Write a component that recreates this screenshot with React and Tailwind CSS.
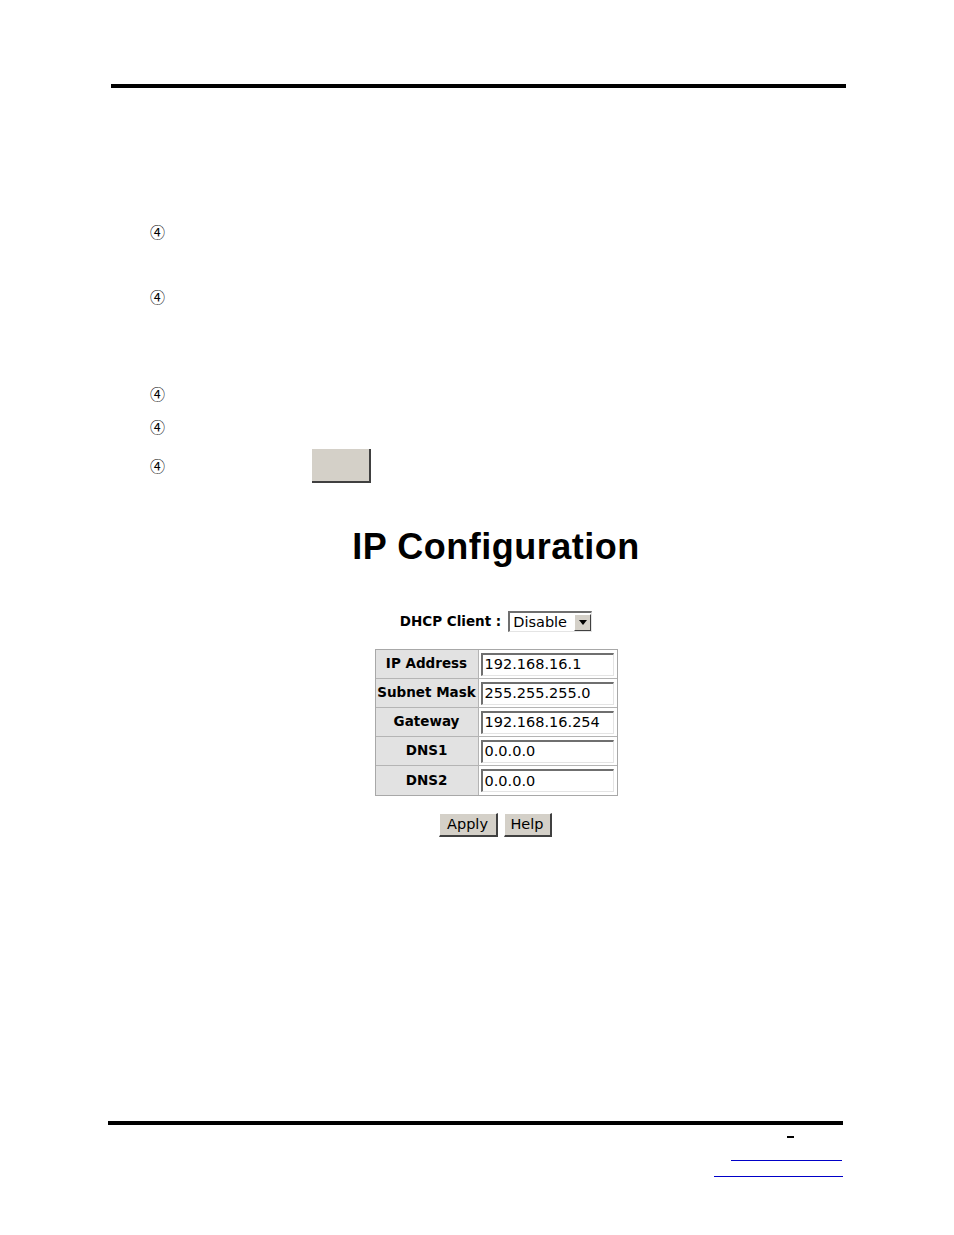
import React from "react";

const dv = { fontFamily: '"DejaVu Sans", Verdana, sans-serif' };

function Circ() {
  return (
    <span
      className="block w-[14px] text-[15px] leading-[16px] h-[16px] text-black"
      style={{ fontFamily: '"Noto Sans CJK JP", "DejaVu Sans", sans-serif' }}
    >
      ④
    </span>
  );
}

function WinInput({ value }) {
  return (
    <div className="h-[23px] w-[133px] bg-white border-t-2 border-l-2 border-t-[#6f6f6f] border-l-[#6f6f6f] border-b border-r border-b-[#e4e4e4] border-r-[#e4e4e4] flex items-center pl-[2px]">
      <span className="text-[14.5px] leading-none text-black" style={dv}>
        {value}
      </span>
    </div>
  );
}

function WinButton({ children, w }) {
  return (
    <div
      className={`h-[24px] ${w} bg-[#d4d0c8] border-t border-l border-t-white border-l-white border-b-2 border-r-2 border-b-[#404040] border-r-[#404040] flex items-center justify-center`}
    >
      <span className="text-[14.5px] leading-none text-black" style={dv}>
        {children}
      </span>
    </div>
  );
}

const rows = [
  ["IP Address", "192.168.16.1"],
  ["Subnet Mask", "255.255.255.0"],
  ["Gateway", "192.168.16.254"],
  ["DNS1", "0.0.0.0"],
  ["DNS2", "0.0.0.0"],
];

export default function App() {
  return (
    <div className="w-[954px] h-[1235px] bg-white overflow-hidden pt-[84px]">
      {/* top rule */}
      <div className="ml-[111px] w-[735px] h-[4px] bg-black" />

      {/* list bullets */}
      <div className="ml-[150px] flex flex-col">
        <div className="mt-[136px]">
          <Circ />
        </div>
        <div className="mt-[49px]">
          <Circ />
        </div>
        <div className="mt-[81px]">
          <Circ />
        </div>
        <div className="mt-[17px]">
          <Circ />
        </div>
        <div className="mt-[14px] flex items-center h-[34px]">
          <Circ />
          <div className="ml-[148px] w-[59px] h-[34px] bg-[#d4d0c8] border-r-2 border-b-2 border-r-[#404040] border-b-[#404040]" />
        </div>
      </div>

      {/* IP configuration panel */}
      <div className="ml-[345px] w-[302px] flex flex-col items-center">
        <div
          className="mt-[46px] text-[36px] leading-none font-bold text-black tracking-[0.5px]"
          style={{ fontFamily: '"Liberation Sans", Arial, sans-serif' }}
        >
          IP Configuration
        </div>

        <div className="mt-[46px] h-[21px] flex items-center">
          <span className="text-[13.5px] font-bold text-black leading-none mr-[7px]" style={dv}>
            DHCP Client :
          </span>
          <div className="w-[84px] h-[21px] bg-white border-t-2 border-l-2 border-t-[#6f6f6f] border-l-[#6f6f6f] border-b border-r border-b-[#e4e4e4] border-r-[#e4e4e4] flex items-center justify-between pl-[3px]">
            <span className="text-[14.5px] leading-none text-black" style={dv}>
              Disable
            </span>
            <div className="w-[17px] h-[17px] bg-[#d4d0c8] border-t border-l border-t-white border-l-white border-b border-r border-b-[#404040] border-r-[#404040] flex items-center justify-center">
              <svg width="8" height="5" viewBox="0 0 8 5">
                <path d="M0 0H8L4 5Z" fill="#000" />
              </svg>
            </div>
          </div>
        </div>

        <div className="mt-[17px] border border-[#a8a8a8] grid grid-cols-[103px_138px]">
          {rows.map(([label, value], i) => (
            <React.Fragment key={label}>
              <div
                className={`h-[29px] bg-[#e2e2e2] border-r border-[#b4b4b4] ${
                  i < rows.length - 1 ? "border-b" : ""
                } flex items-center justify-center`}
              >
                <span className="text-[13.5px] font-bold text-black leading-none" style={dv}>
                  {label}
                </span>
              </div>
              <div
                className={`h-[29px] bg-white border-[#b4b4b4] ${
                  i < rows.length - 1 ? "border-b" : ""
                } flex items-center pl-[2px]`}
              >
                <WinInput value={value} />
              </div>
            </React.Fragment>
          ))}
        </div>

        <div className="mt-[17px] flex gap-[6px] ml-[-2px]">
          <WinButton w="w-[59px]">Apply</WinButton>
          <WinButton w="w-[48px]">Help</WinButton>
        </div>
      </div>

      {/* bottom rule */}
      <div className="mt-[284px] ml-[108px] w-[735px] h-[4px] bg-black" />
      <div className="mt-[11px] ml-[787px] w-[7px] h-[2px] bg-black" />
      <div className="mt-[22px] ml-[731px] w-[111px] h-px bg-[#0000c8]" />
      <div className="mt-[15px] ml-[714px] w-[129px] h-px bg-[#0000c8]" />
    </div>
  );
}
